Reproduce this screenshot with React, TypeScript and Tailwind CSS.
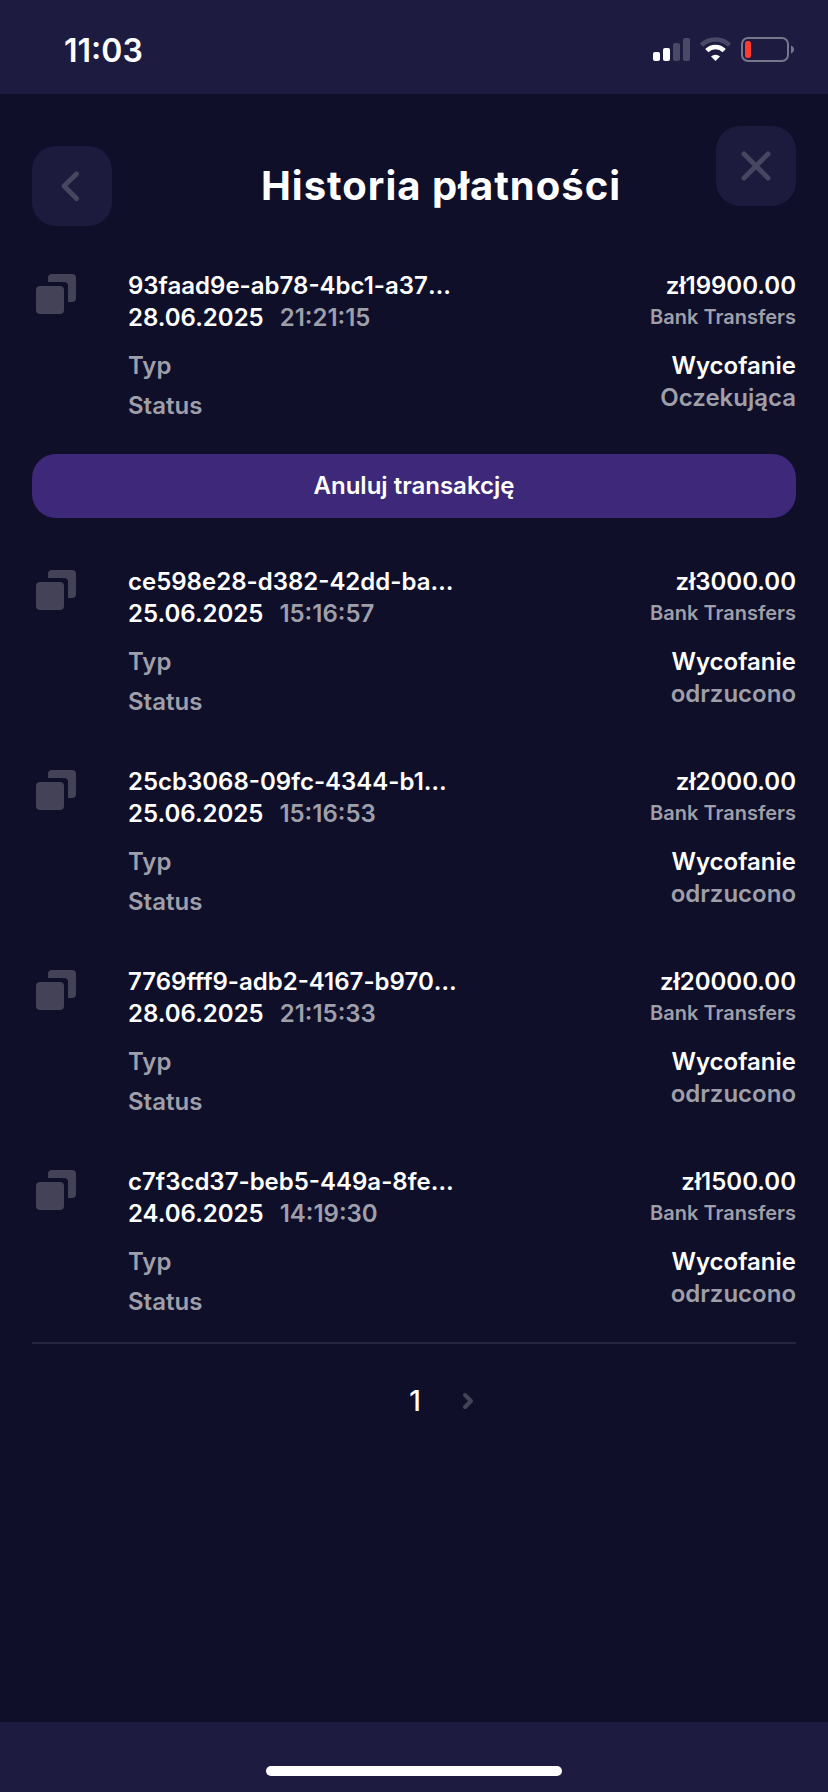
import React from "react";

type Transaction = {
  id: string;
  date: string;
  time: string;
  amount: string;
  status: string;
  cancellable?: boolean;
};

const transactions: Transaction[] = [
  { id: "93faad9e-ab78-4bc1-a37", date: "28.06.2025", time: "21:21:15", amount: "zł19900.00", status: "Oczekująca", cancellable: true },
  { id: "ce598e28-d382-42dd-ba", date: "25.06.2025", time: "15:16:57", amount: "zł3000.00", status: "odrzucono" },
  { id: "25cb3068-09fc-4344-b1", date: "25.06.2025", time: "15:16:53", amount: "zł2000.00", status: "odrzucono" },
  { id: "7769fff9-adb2-4167-b970", date: "28.06.2025", time: "21:15:33", amount: "zł20000.00", status: "odrzucono" },
  { id: "c7f3cd37-beb5-449a-8fe", date: "24.06.2025", time: "14:19:30", amount: "zł1500.00", status: "odrzucono" },
];

function StatusBar() {
  return (
    <header className="flex h-[94px] shrink-0 items-center justify-between bg-[#1d1c40] pt-1.5 pr-[33px] pl-16">
      <span className="pt-0.5 text-[32px] leading-10 font-semibold">11:03</span>
      <svg width="142" height="26" viewBox="0 0 142 26" fill="none">
        <rect x="0" y="15" width="7" height="9" rx="2" fill="#fff" />
        <rect x="10" y="11" width="7" height="13" rx="2" fill="#fff" />
        <rect x="20" y="6" width="7" height="18" rx="2" fill="#4a4966" />
        <rect x="30" y="1" width="7" height="23" rx="2" fill="#4a4966" />
        <path d="M48.5 8.2a20 20 0 0 1 28 0" stroke="#4a4966" strokeWidth="4.6" />
        <path d="M53.8 13.6a12.4 12.4 0 0 1 17.4 0" stroke="#fff" strokeWidth="4.6" />
        <path d="M58 19.4a6.6 6.6 0 0 1 9 0L62.5 24z" fill="#fff" />
        <rect x="89" y="1" width="46" height="23" rx="6" stroke="#77768c" strokeWidth="2" />
        <rect x="92" y="4" width="6" height="17" rx="2.5" fill="#ff3b30" />
        <path d="M138 8.5c4 1.5 4 6.500 0 8z" fill="#77768c" />
      </svg>
    </header>
  );
}

function CopyIcon() {
  return (
    <svg className="mt-1 ml-1 shrink-0" width="40" height="40" viewBox="0 0 40 40" fill="#434257">
      <path d="M12 8V4a4 4 0 0 1 4-4h20a4 4 0 0 1 4 4v20a4 4 0 0 1-4 4h-4V12a4 4 0 0 0-4-4z" />
      <rect y="12" width="28" height="28" rx="4" />
    </svg>
  );
}

function TransactionItem({ item }: { item: Transaction }) {
  return (
    <li>
      <div className="flex h-[152px] items-start">
        <CopyIcon />
        <div className="ml-[52px] flex-1">
          <p className="flex">
            {item.id}
            <span>…</span>
          </p>
          <p className="flex gap-4">
            {item.date}
            <span className="text-[#9f9faa]">{item.time}</span>
          </p>
          <p className="mt-4 text-[#9f9faa]">Typ</p>
          <p className="mt-2 text-[#9f9faa]">Status</p>
        </div>
        <div className="text-right">
          <p>{item.amount}</p>
          <p className="text-xl leading-[30px] text-[#9f9faa]">Bank Transfers</p>
          <p className="mt-[18px]">Wycofanie</p>
          <p className="text-[#9f9faa]">{item.status}</p>
        </div>
      </div>
      {item.cancellable && (
        <button className="mt-8 block h-16 w-full rounded-3xl bg-[#3d2879] text-center">Anuluj transakcję</button>
      )}
    </li>
  );
}

export default function App() {
  return (
    <div className="flex h-[1792px] w-[828px] flex-col overflow-hidden bg-[#100f2a] font-['Inter',sans-serif] text-white">
      <StatusBar />
      <main className="flex-1 px-8 pt-8">
        <div className="flex h-[100px] items-start">
          <button className="mt-5 flex size-20 items-center justify-center rounded-3xl bg-[#1c1b3d]">
            <svg width="80" height="80" viewBox="0 0 80 80" fill="none" stroke="#474660" strokeWidth="5" strokeLinecap="round" strokeLinejoin="round">
              <path d="M44.500 28 32 40l12.500 12.500" />
            </svg>
          </button>
          <h1 className="mt-8 flex-1 pl-[54px] text-center text-[40px] leading-[56px] font-bold tracking-[1px]">Historia płatności</h1>
          <button className="flex size-20 items-center justify-center rounded-3xl bg-[#1c1b3d]">
            <svg width="80" height="80" viewBox="0 0 80 80" fill="none" stroke="#474660" strokeWidth="5" strokeLinecap="round">
              <path d="M28 28l24 24M52 28 28 52" />
            </svg>
          </button>
        </div>
        <ul className="mt-11 flex flex-col gap-12 border-b-2 border-[#262540] pb-6 text-2xl leading-8 font-semibold">
          {transactions.map((item) => (
            <TransactionItem key={item.id} item={item} />
          ))}
        </ul>
        <nav className="mt-[41px] flex items-center justify-center gap-[41px] pl-[55px]">
          <span className="text-[28px] leading-8 font-medium">1</span>
          <svg width="12" height="18" viewBox="0 0 12 18" fill="none" stroke="#434257" strokeWidth="4" strokeLinecap="round" strokeLinejoin="round">
            <path d="M3 3l6 6-6 6" />
          </svg>
        </nav>
      </main>
      <footer className="flex h-[70px] shrink-0 justify-center bg-[#1d1c40] pt-11">
        <div className="h-2.5 w-[296px] rounded-full bg-white" />
      </footer>
    </div>
  );
}
